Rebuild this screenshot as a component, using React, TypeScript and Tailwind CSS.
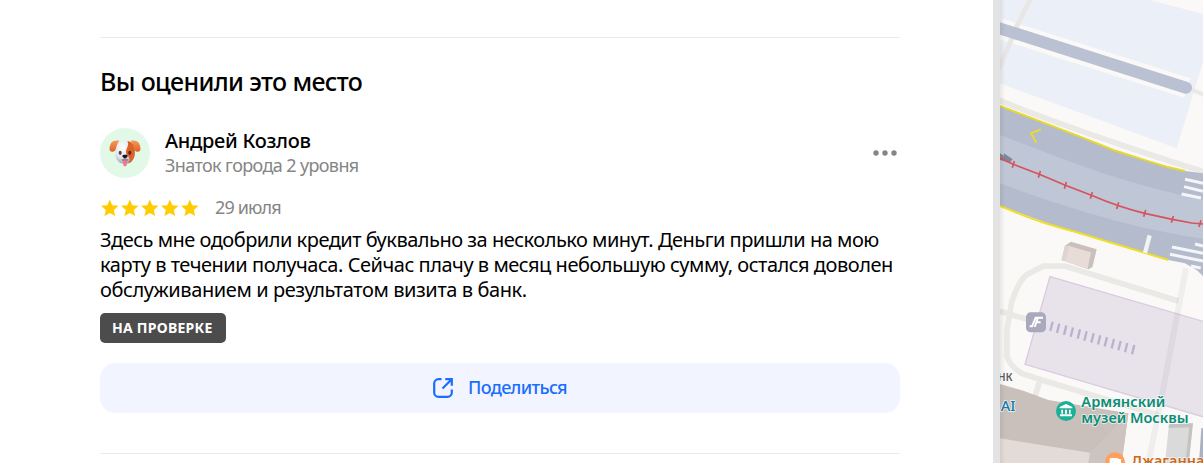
const STAR = "M9 0.5l2.5 5.700 6.300.6-4.800 4.100 1.400 6.200L9 13.900l-5.400 3.200L5 10.900.2 6.800l6.300-.6z"

const TRAM_TICKS = [
  [40, 493],
  [118, 523],
  [196, 556],
  [274, 586],
  [353, 617],
  [434, 640],
  [517, 658],
  [600, 671],
]

const STEPS = [154, 174, 195, 215, 236, 256, 277, 297, 317, 338, 358, 378, 399]

function DogAvatar() {
  return (
    <div className="flex h-[50px] w-[50px] items-center justify-center rounded-full bg-[#e1f9e6]">
      <svg className="mt-[2px]" width="32" height="28" viewBox="0 0 32 28">
        <defs>
          <linearGradient id="ear" x1="0" y1="0" x2="0" y2="1">
            <stop offset="0" stopColor="#f39a5c" />
            <stop offset="1" stopColor="#df6423" />
          </linearGradient>
          <radialGradient id="face" cx="0.4" cy="0.3" r="0.7">
            <stop offset="0" stopColor="#ffffff" />
            <stop offset="0.65" stopColor="#e4e3ea" />
            <stop offset="1" stopColor="#9f9eac" />
          </radialGradient>
        </defs>
        <path d="M16 .8c6.500 0 9.500 4 9.800 10.200.3 5-.8 8-3.500 10.700-2.800 2.800-9.800 2.800-12.600 0C7 19 5.900 16 6.200 11 6.500 4.800 9.500.8 16 .8z" fill="url(#face)" />
        <path d="M18.500 1c5 .8 7.200 4 7.300 10 .1 5-.8 8-3.500 10.700-.9.8-2 1.300-3 1.600 1.200-1.800 1.700-3.600.9-5.300-1.300-2.500-3.400-2.800-3.200-6.400.1-2.900 3.200-5.800 1.500-10.600z" fill="#dc6227" />
        <path d="M10.500.8C6 0 2.500 1 1.300 4.700.6 7.200.1 9.500 1 10.700c1.200 1.500 4.400 1.200 5.500-.8 1-2 .8-5.500 4-9.100z" fill="url(#ear)" />
        <path d="M21.500.8c4.500-.8 8 .2 9.200 3.900.7 2.500 1.200 4.800.3 6-1.200 1.500-4.400 1.200-5.500-.8-1-2-.8-5.500-4-9.100z" fill="url(#ear)" />
        <ellipse cx="11.200" cy="12.800" rx="1.500" ry="2.100" fill="#4a4246" />
        <ellipse cx="20.800" cy="12.800" rx="1.500" ry="2.100" fill="#4a2a22" />
        <path d="M12.500 19.300c1.300-.3 2.500-.5 3.500-1.600 1 1.100 2.200 1.300 3.500 1.600-.6 1.800-1.800 2.700-3.500 2.700s-2.900-.9-3.500-2.700z" fill="#93868d" />
        <path d="M14 20.700h4l-.2 3.700c-.2 2.500-3.400 2.500-3.600 0z" fill="#fb7290" />
        <path d="M13.300 15.800c0-1.500 5.400-1.500 5.400 0 0 1.300-1.500 2.500-2.700 2.500s-2.700-1.200-2.700-2.500z" fill="#17161b" />
      </svg>
    </div>
  )
}

function ReviewCard() {
  return (
    <main className="w-[993px] shrink-0 pl-[100px] pr-[93px] pt-[37px]">
      <section className="h-[417px] border-y border-[#ebebeb] pt-7">
        <h2 className="h-8 whitespace-nowrap text-[25px] font-medium leading-[30px] tracking-[-0.620px]">Вы оценили это место</h2>

        <div className="mt-[29px] flex h-[52px] items-center">
          <DogAvatar />
          <div className="ml-[15px] flex-1 whitespace-nowrap">
            <div className="text-[20px] font-medium leading-[25px] tracking-[-0.280px]">Андрей Козлов</div>
            <div className="text-[18px] leading-[25px] tracking-[-0.620px] text-[#858585]">Знаток города 2 уровня</div>
          </div>
          <svg className="mr-[3px]" width="24" height="6" viewBox="0 0 24 6" fill="#858585">
            <circle cx="3" cy="3" r="2.700" />
            <circle cx="12" cy="3" r="2.700" />
            <circle cx="21" cy="3" r="2.700" />
          </svg>
        </div>

        <div className="mt-[17px] flex h-[24px] items-center">
          <div className="flex gap-[2px]">
            {[1, 2, 3, 4, 5].map((n) => (
              <svg key={n} className="-mt-px" width="18" height="18" viewBox="-0.8 0 18 18">
                <path d={STAR} fill="#ffcc00" />
              </svg>
            ))}
          </div>
          <span className="-mt-[2px] ml-[17px] whitespace-nowrap text-[18px] tracking-[-0.850px] text-[#858585]">29 июля</span>
        </div>

        <p className="mt-[7px] whitespace-nowrap text-[20px] leading-[25px]">
          <span className="block tracking-[-0.500px]">Здесь мне одобрили кредит буквально за несколько минут. Деньги пришли на мою</span>
          <span className="block tracking-[-0.470px]">карту в течении получаса. Сейчас плачу в месяц небольшую сумму, остался доволен</span>
          <span className="block tracking-[-0.410px]">обслуживанием и результатом визита в банк.</span>
        </p>

        <div className="mt-[11px] flex h-[30px] w-[126px] items-center whitespace-nowrap rounded-[5px] bg-[#4c4c4c] pb-[2px] pl-3 text-[14px] font-bold tracking-[0.250px] text-white">
          НА ПРОВЕРКЕ
        </div>

        <button className="mt-5 flex h-[50px] w-full items-center rounded-[15px] bg-[#f2f5ff] pl-[333px] text-[18px] font-medium tracking-[-0.650px] text-[#196dff]">
          <svg width="20" height="20" viewBox="0 0 20 20" fill="none" stroke="#196dff" strokeWidth="2.200">
            <path d="M8.500 1.200H5.500A4.300 4.300 0 0 0 1.200 5.500v9a4.300 4.300 0 0 0 4.300 4.300h9a4.300 4.300 0 0 0 4.300-4.300v-3" />
            <path d="M9.500 10.500l9-9M12.300 1.200h6.500v6.500" />
          </svg>
          <span className="-mt-[2px] ml-[15px] whitespace-nowrap">Поделиться</span>
        </button>
      </section>
    </main>
  )
}

function CityMap() {
  return (
    <svg className="block h-[463px] w-[203px] shrink-0" viewBox="0 0 609 1389" fill="none">
      <defs>
        <linearGradient id="edge">
          <stop offset="0" stopColor="#000" stopOpacity="0.07" />
          <stop offset="1" stopColor="#000" stopOpacity="0" />
        </linearGradient>
      </defs>
      <rect width="609" height="1389" fill="#faf9f7" />

      {/* blocks north of the avenue */}
      <path d="M0 0H450L609 42V185L530 445L0 250z" fill="#ebeff8" />
      <path d="M0 86L562 264" stroke="#faf9f7" strokeWidth="62" />
      <path d="M92 -5L50 80L30 128L-5 210" stroke="#e9e7e5" strokeWidth="15" />
      <path d="M560 262L615 286" stroke="#ebe9e6" strokeWidth="12" />
      <path d="M-20 79L558 263" stroke="#b9c1d3" strokeWidth="36" strokeLinecap="round" />
      <path d="M-5 300C130 355 260 400 400 447S560 500 615 516" stroke="#eae9e6" strokeWidth="17" />

      {/* avenue */}
      <path d="M0 318L240 410L340 450L440 482L500 500L555 513L609 520V828L590 810L555 790L505 780L180 683L0 618z" fill="#b4bbcc" />
      <path d="M0 405C200 480 330 540 609 600V716C420 690 200 625 0 550z" fill="#bfc6d5" />
      <path d="M0 318L240 410L340 450L440 482L500 500L555 513" stroke="#e6d92e" strokeWidth="6" />
      <path d="M0 618C120 668 160 678 220 694L505 780" stroke="#f0df25" strokeWidth="6" />
      <path d="M123 388L93 400L109 428" stroke="#e9da35" strokeWidth="6" />
      <path d="M0 460L12 467L12 460L38 478L30 487L0 480z" fill="#7d8798" />
      <path d="M0 475L40 493L118 523L196 556L274 586C330 610 370 625 434 640L517 658L575 669L609 672" stroke="#d6535d" strokeWidth="5" />
      {TRAM_TICKS.map(([x, y]) => (
        <path key={x} d={`M${x + 3} ${y - 10}L${x - 3} ${y + 10}`} stroke="#d6535d" strokeWidth="5" />
      ))}
      <path d="M449 706L435 759" stroke="#f2f3f5" strokeWidth="13" />
      <path d="M555 538L609 550M552 560L609 574M545 582L603 594M585 732L609 738M516 741L609 760M510 763L609 783M573 798L602 804" stroke="#f5f6f8" strokeWidth="9" />

      {/* square and footpaths */}
      <path d="M615 966L150 830L75 1093L615 1252" fill="#e8e3eb" stroke="#d9cbdf" strokeWidth="4" />
      <path d="M36 905C48 865 60 840 80 824L130 798H195L535 903M36 900L21 990V1070C28 1092 44 1107 65 1120L125 1140L475 1245M0 934L80 958M120 1140L105 1190" stroke="#eae9e6" strokeWidth="17" />
      <path d="M558 805L540 900L485 1190L445 1389" stroke="#3c3833" strokeOpacity="0.055" strokeWidth="18" />

      {/* buildings */}
      <path d="M213 725L290 748L277 802L265 808L185 780L195 737z" fill="#c9bfbb" />
      <path d="M205 737L273 757L263 806L185 780z" fill="#e7dcd8" />
      <path d="M185 780L195 737L208 737L197 784z" fill="#ded4d0" />
      <path d="M0 1152L70 1172L145 1200L385 1240L365 1389H0z" fill="#c9c0bb" />
      <path d="M270 1358L385 1240L365 1389H265z" fill="#cdc4bf" />
      <path d="M0 1315L270 1358L265 1389H0z" fill="#e4dbd6" />
      <path d="M507 1273L578 1270L567 1389H495z" fill="#dadada" />
      <path d="M507 1273L578 1270L577 1282L506 1284zM569 1270H579L566 1389H556z" fill="#c3c3c3" />
      <path d="M604 1285H609V1389H597z" fill="#a9b1c4" />

      {STEPS.map((x, i) => (
        <path key={x} d={`M${x + 4} ${965 + i * 5.8}L${x - 3} ${993 + i * 5.8}`} stroke="#bab0d0" strokeWidth="7" />
      ))}

      {/* train station pin */}
      <rect x="78" y="937" width="60" height="60" rx="14" fill="#a9a8bd" />
      <path d="M89 979H96L107 953H114M104 981L114 953H129M111 967H122" stroke="#fff" strokeWidth="6" />

      {/* museum pin */}
      <circle cx="198" cy="1233" r="30" fill="#1bb097" />
      <path d="M179 1225V1221L198 1212L217 1221V1225zM184 1229H189V1241H184zM195 1229H201V1241H195zM207 1229H212V1241H207zM180 1243H216V1249H180z" fill="#fff" />

      {/* cafe pin */}
      <circle cx="345" cy="1387" r="30" fill="#ff9f59" />
      <path d="M331 1376H352V1400H331zM352 1379H361V1390H352" stroke="#fff" strokeWidth="4" fill="#fff" />

      <rect width="16" height="1389" fill="url(#edge)" />

      <g stroke="#faf9f7" strokeOpacity="0.8" strokeWidth="5" strokeLinejoin="round" paintOrder="stroke" fontWeight="600" fontSize="44">
        <text x="-7" y="1144" fill="#5d5d5d" fontSize="43" fontWeight="500" textLength="45" lengthAdjust="spacingAndGlyphs">нк</text>
        <text x="2" y="1234" fill="#147ab0" fontWeight="500">AI</text>
        <text x="244" y="1221" fill="#0a8d77" textLength="252" lengthAdjust="spacingAndGlyphs">Армянский</text>
        <text x="244" y="1269" fill="#0a8d77" textLength="322" lengthAdjust="spacingAndGlyphs">музей Москвы</text>
        <text x="394" y="1399" fill="#cd6a20" textLength="219" lengthAdjust="spacingAndGlyphs">Джаганна</text>
      </g>
    </svg>
  )
}

export default function App() {
  return (
    <div className="flex h-[463px] w-[1203px] overflow-hidden bg-white font-['Noto_Sans',sans-serif] text-black">
      <ReviewCard />
      <div className="w-[7px] shrink-0 bg-[#e3e3e3]" />
      <CityMap />
    </div>
  )
}
